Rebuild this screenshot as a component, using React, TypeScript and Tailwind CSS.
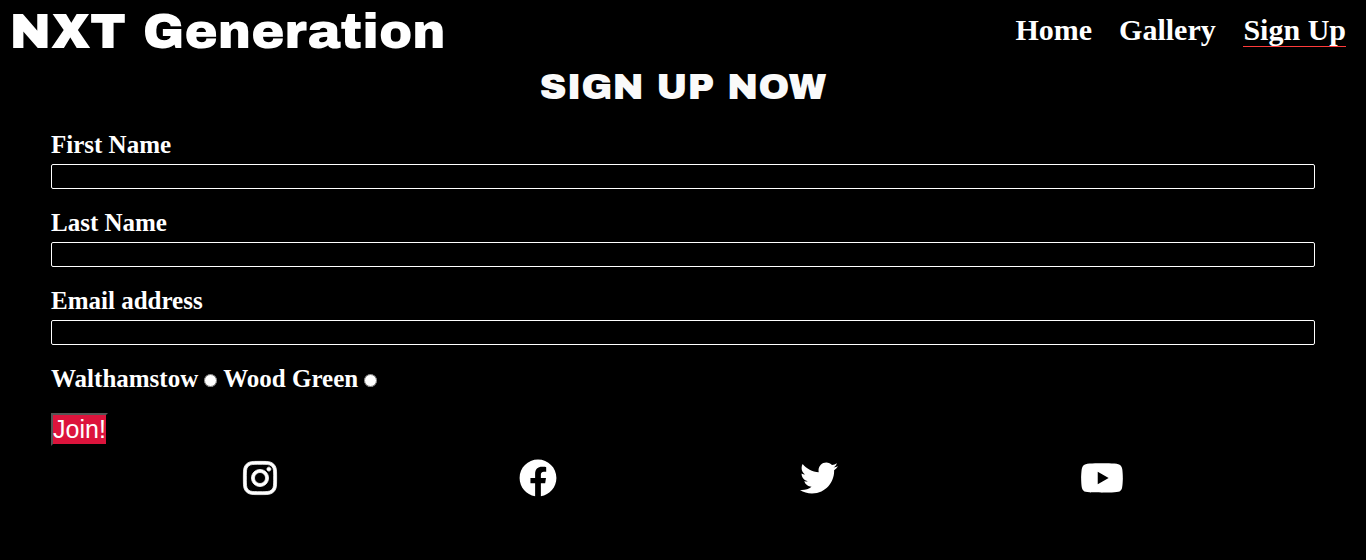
import { FaInstagram, FaFacebook, FaTwitter, FaYoutube } from "react-icons/fa";

const fields = ["First Name", "Last Name", "Email address"];

export default function App() {
  return (
    <div className="min-h-screen bg-black text-white font-bold font-['Liberation_Serif',serif]">
      <header className="flex h-[60px] items-start justify-between pl-[9.5px] pr-5">
        <h1 className="h-[60px] w-[434px] whitespace-nowrap font-['Archivo_Black','Inter',sans-serif] text-[50px] font-normal leading-[64px]">
          NXT Generation
        </h1>
        <nav className="flex gap-[27px] pt-[13px] text-[30px] leading-[34px]">
          <a>Home</a>
          <a className="mr-[0.7px]">Gallery</a>
          <a className="h-[34px] border-b border-[#ff3b3b]">Sign Up</a>
        </nav>
      </header>
      <h2 className="h-[68px] pt-1 text-center font-['Archivo_Black','Inter',sans-serif] text-[37.5px] font-normal leading-[46px] text-[#fafafa]">SIGN UP NOW</h2>
      <form className="px-[51px]">
        {fields.map((f) => (
          <label key={f} className="block h-[78px] text-[25px] leading-[34px]">
            <span className="block">{f}</span>
            <input className="mt-[2px] block h-[25px] w-full rounded-[2px] border border-white bg-black" />
          </label>
        ))}
        <div className="flex h-[51px] text-[25px] leading-[34px]">
          <label className="flex">Walthamstow<input type="radio" name="place" className="ml-[6px] mt-3 size-[13px]" /></label>
          <label className="ml-[6px] flex">Wood Green<input type="radio" name="place" className="ml-[6px] mt-3 size-[13px]" /></label>
        </div>
        <button type="button" className="block h-[33px] w-[57px] whitespace-nowrap border-2 border-t-[#555] border-l-[#555] border-b-black border-r-black bg-[#dc143c] font-['Liberation_Sans',sans-serif] text-[25px] font-normal leading-[29px]">Join!</button>
      </form>
      <footer className="flex pl-[241px] pt-3">
        <FaInstagram size={38} className="mt-px" stroke="white" strokeWidth={10} />
        <FaFacebook size={38} className="ml-[240.4px] mt-[0.6px]" />
        <FaTwitter size={38} className="ml-[242.6px] mt-px" />
        <FaYoutube size={44} className="ml-[242px] -mt-[2px]" />
      </footer>
    </div>
  );
}
